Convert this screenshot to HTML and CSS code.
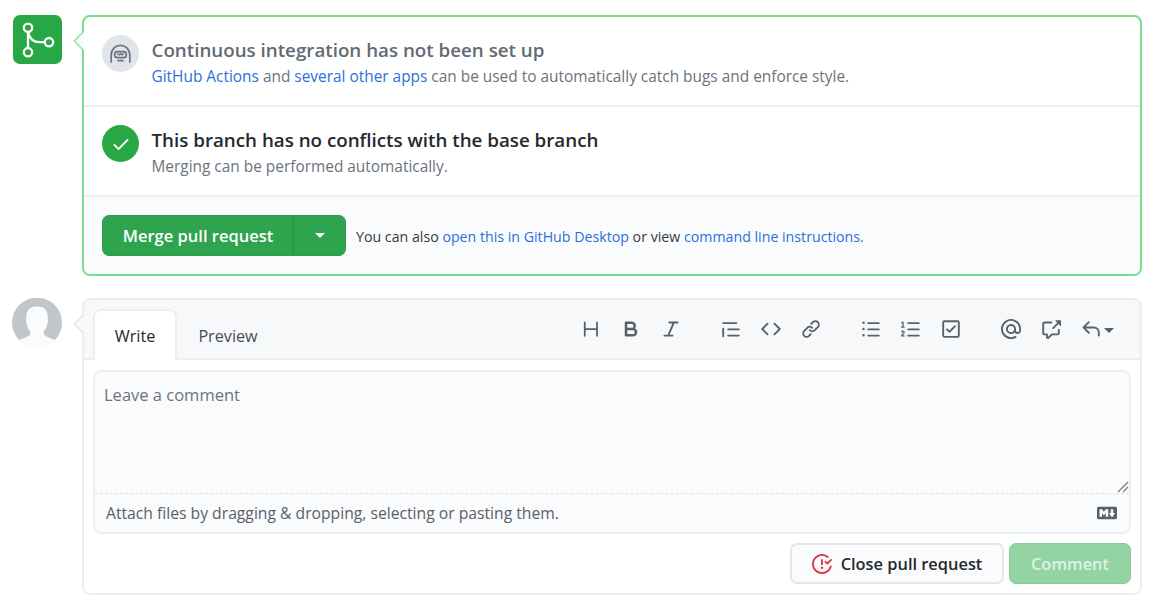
FILE: index.html
```html
<!DOCTYPE html>
<html lang="en">
<head>
<meta charset="utf-8">
<title>Pull request</title>
<link rel="stylesheet" href="styles.css">
</head>
<body>
<main class="page">
  <section class="item">
    <div class="badge">
      <svg width="49" height="49" viewBox="0 0 49 49" fill="none" stroke="#fff" stroke-width="2.3"><circle cx="15" cy="12.8" r="4.2"/><circle cx="15" cy="37.2" r="4.2"/><circle cx="36" cy="27.2" r="4.2"/><path d="M15 17v16M15 17c1.500 7 6 10.200 12 10.200h5"/></svg>
    </div>
    <div class="box box-merge">
      <svg class="arrow arrow-green" width="11" height="20" viewBox="0 0 11 20"><path class="fill" d="M11 1 1.500 10 11 19z"/><path class="line" d="M10 1 1.500 10l8.500 9"/></svg>
      <div class="row">
        <div class="circle circle-gray">
          <svg width="21" height="20" viewBox="0 0 21 20" fill="none" stroke="#6a737d" stroke-width="1.700" stroke-linecap="round"><path d="M1.200 18v-7.300a9.300 9.300 0 0 1 18.600 0V18"/><rect x="4.700" y="7.600" width="11.600" height="6" rx="2.600"/><path d="M7.600 9.700l1.500 1.200 1.500-1.200 1.500 1.200 1.400-1.200" stroke-width="1.400"/><path d="M8 16.600h5"/></svg>
        </div>
        <div>
          <h2 class="title muted">Continuous integration has not been set up</h2>
          <p class="sub"><a>GitHub Actions</a> and <a>several other apps</a> can be used to automatically catch bugs and enforce style.</p>
        </div>
      </div>
      <div class="row">
        <div class="circle circle-green">
          <svg width="20" height="20" viewBox="0 0 16 16" fill="#fff"><path d="M13.780 4.220a.75.75 0 010 1.060l-7.250 7.250a.75.75 0 01-1.060 0L2.220 9.280a.75.75 0 011.060-1.060L6 10.940l6.720-6.720a.75.75 0 011.060 0z"/></svg>
        </div>
        <div>
          <h2 class="title">This branch has no conflicts with the base branch</h2>
          <p class="sub">Merging can be performed automatically.</p>
        </div>
      </div>
      <div class="actions">
        <div class="merge"><button class="merge-main">Merge pull request</button><button class="merge-more"><i class="caret"></i></button></div>
        <p class="also">You can also <a>open this in GitHub Desktop</a> or view <a>command line instructions.</a></p>
      </div>
    </div>
  </section>

  <section class="item">
    <svg class="avatar" width="50" height="50" viewBox="0 0 50 50"><circle cx="25" cy="25" r="25" fill="#fafbfc"/><path d="M7 42A25 25 0 1 1 43 42C38 40 32 38.500 31.500 35.500c0-3 3.500-5 3.800-10.500 1.200-1 1-2.500.4-3C36.500 13 33 8.500 25 8.500S13.500 13 14.300 22c-.6.5-.8 2 .4 3 .3 5.500 3.800 7.500 3.800 10.500C18 38.500 12 40 7 42z" fill="#c1c6cb"/></svg>
    <div class="box box-comment">
      <svg class="arrow arrow-gray" width="11" height="20" viewBox="0 0 11 20"><path class="fill" d="M11 1 1.500 10 11 19z"/><path class="line" d="M10 1 1.500 10l8.500 9"/></svg>
      <header class="head">
        <nav class="tabs"><span class="tab tab-on">Write</span><span class="tab">Preview</span></nav>
        <div class="toolbar">
          <div class="group">
            <svg viewBox="0 0 16 16"><path d="M3 2.600v10.800M12.800 2.600v10.800M3 8h9.800" fill="none" stroke="#586069" stroke-width="1.400" stroke-linecap="round"/></svg>
            <svg viewBox="0 0 16 16"><path fill-rule="evenodd" d="M4 2a1 1 0 00-1 1v10a1 1 0 001 1h5.500a3.500 3.500 0 001.852-6.470A3.500 3.500 0 008.500 2H4zm4.500 5a1.500 1.500 0 100-3H5v3h3.500zM5 9v3h4.500a1.500 1.500 0 000-3H5z"/></svg>
            <svg viewBox="0 0 16 16"><path d="M6 2.750A.75.75 0 016.750 2h6.500a.75.75 0 010 1.500h-2.505l-3.858 9H9.250a.75.75 0 010 1.500h-6.500a.75.75 0 010-1.500h2.505l3.858-9H6.750A.75.75 0 016 2.750z"/></svg>
          </div>
          <div class="group">
            <svg viewBox="0 0 16 16"><path d="M1.750 2.500a.75.75 0 000 1.500h10.500a.75.75 0 000-1.500H1.750zm4 5a.75.75 0 000 1.500h8.500a.75.75 0 000-1.500h-8.500zm0 5a.75.75 0 000 1.500h8.500a.75.75 0 000-1.500h-8.500zM2.500 7.750a.75.75 0 00-1.500 0v6a.75.75 0 001.500 0v-6z"/></svg>
            <svg viewBox="0 0 16 16"><path d="M4.720 3.220a.75.75 0 011.060 1.060L2.060 8l3.720 3.720a.75.75 0 11-1.060 1.060L.47 8.530a.75.75 0 010-1.060l4.250-4.250zm6.560 0a.75.75 0 10-1.060 1.060L13.940 8l-3.720 3.720a.75.75 0 101.060 1.060l4.250-4.250a.75.75 0 000-1.060l-4.250-4.250z"/></svg>
            <svg viewBox="0 0 16 16"><path d="M7.775 3.275a.75.75 0 001.060 1.060l1.250-1.250a2 2 0 112.830 2.830l-2.500 2.500a2 2 0 01-2.830 0 .75.75 0 00-1.060 1.060 3.500 3.500 0 004.950 0l2.500-2.500a3.500 3.500 0 00-4.950-4.950l-1.250 1.250zm-4.690 9.640a2 2 0 010-2.830l2.500-2.500a2 2 0 012.830 0 .75.75 0 001.060-1.060 3.500 3.500 0 00-4.950 0l-2.500 2.500a3.500 3.500 0 004.950 4.950l1.250-1.250a.75.75 0 00-1.060-1.060l-1.250 1.250a2 2 0 01-2.830 0z"/></svg>
          </div>
          <div class="group">
            <svg viewBox="0 0 16 16"><path d="M2 4a1 1 0 100-2 1 1 0 000 2zm3.750-1.500a.75.75 0 000 1.500h8.500a.75.75 0 000-1.500h-8.500zm0 5a.75.75 0 000 1.500h8.500a.75.75 0 000-1.500h-8.500zm0 5a.75.75 0 000 1.500h8.500a.75.75 0 000-1.500h-8.500zM3 8a1 1 0 11-2 0 1 1 0 012 0zm-1 6a1 1 0 100-2 1 1 0 000 2z"/></svg>
            <svg viewBox="0 0 16 16"><path d="M5.750 3.250h8.500M5.750 8.250h8.500M5.750 13.250h8.500" fill="none" stroke="#586069" stroke-width="1.500" stroke-linecap="round"/><path d="M.6 3l1-.5v4M.5 6.500h2M.5 10.300c.5-1 2-.9 2 .2 0 1.400-2 1.500-2 3h2" fill="none" stroke="#586069" stroke-linecap="round" stroke-linejoin="round"/></svg>
            <svg viewBox="0 0 16 16"><path fill-rule="evenodd" d="M2.500 2.750a.25.25 0 01.25-.25h10.500a.25.25 0 01.25.25v10.500a.25.25 0 01-.25.25H2.750a.25.25 0 01-.25-.25V2.750zM2.750 1A1.750 1.750 0 001 2.750v10.500c0 .966.784 1.750 1.750 1.750h10.500A1.750 1.750 0 0015 13.250V2.750A1.750 1.750 0 0013.250 1H2.750zm9.030 5.280a.75.75 0 00-1.060-1.060L6.750 9.190 5.280 7.720a.75.75 0 00-1.060 1.060l2 2a.75.75 0 001.060 0l4.500-4.500z"/></svg>
          </div>
          <div class="group">
            <svg viewBox="0 0 16 16"><path fill-rule="evenodd" d="M4.750 2.370a6.500 6.500 0 006.500 11.260.75.75 0 01.75 1.298 8 8 0 113.994-7.273.754.754 0 01.006.095v1.500a2.750 2.750 0 01-5.072 1.475A4 4 0 1112 8v1.250a1.250 1.250 0 002.500 0V7.867a6.500 6.500 0 00-9.750-5.496V2.370zM10.500 8a2.500 2.500 0 10-5 0 2.500 2.500 0 005 0z"/></svg>
            <svg viewBox="0 0 16 16"><path d="M16 1.250v4.146a.25.25 0 01-.427.177L14.030 4.030l-3.750 3.750a.75.75 0 11-1.060-1.060l3.750-3.750-1.543-1.543A.25.25 0 0111.604 1h4.146a.25.25 0 01.25.25zM2.750 3.500a.25.25 0 00-.25.25v7.500c0 .138.112.25.25.25h2a.75.75 0 01.75.75v2.190l2.720-2.720a.75.75 0 01.53-.22h4.500a.25.25 0 00.25-.25v-2.500a.75.75 0 111.500 0v2.500A1.750 1.750 0 0113.250 13H9.060l-2.573 2.573A1.457 1.457 0 014 14.543V13H2.750A1.750 1.750 0 011 11.250v-7.500C1 2.784 1.784 2 2.750 2h5.500a.75.75 0 010 1.500h-5.500z"/></svg>
            <div class="reply"><svg viewBox="0 0 16 16"><path d="M6.780 1.970a.75.75 0 010 1.060L3.810 6h6.440A4.750 4.750 0 0115 10.750v2.500a.75.75 0 01-1.500 0v-2.500a3.250 3.250 0 00-3.250-3.250H3.810l2.970 2.970a.75.75 0 11-1.060 1.060L1.470 7.280a.75.75 0 010-1.060l4.250-4.250a.75.75 0 011.060 0z"/></svg><i class="caret caret-dark"></i></div>
          </div>
        </div>
      </header>
      <div class="editor">
        <div class="area"><span class="placeholder">Leave a comment</span><svg class="grip" width="12" height="12" viewBox="0 0 12 12"><path d="M1 11 11 1M6 11l5-5" stroke="#777" stroke-width="1.200"/></svg></div>
        <div class="attach"><span>Attach files by dragging &amp; dropping, selecting or pasting them.</span><svg width="20" height="20" viewBox="0 0 16 16" fill="#586069"><path fill-rule="evenodd" d="M14.850 3H1.150C.52 3 0 3.520 0 4.150v7.690C0 12.480.52 13 1.150 13h13.690c.64 0 1.150-.52 1.150-1.150v-7.700C16 3.520 15.480 3 14.850 3zM9 11H7V8L5.500 9.920 4 8v3H2V5h2l1.500 2L7 5h2v6zm2.990.5L9.500 8H11V5h2v3h1.500l-2.510 3.500z"/></svg></div>
      </div>
      <footer class="foot">
        <button class="btn btn-close"><svg width="20" height="20" viewBox="0 0 16 16" fill="#d73a49"><path d="M1.500 8a6.500 6.500 0 0110.650-5.003.75.75 0 00.959-1.153 8 8 0 102.592 8.330.75.75 0 10-1.444-.407A6.500 6.500 0 011.500 8zM8 12a1 1 0 100-2 1 1 0 000 2zm0-8a.75.75 0 01.75.75v3.500a.75.75 0 11-1.500 0v-3.500A.75.75 0 018 4zm4.780 4.280l3-3a.75.75 0 00-1.060-1.060l-2.470 2.470-.97-.97a.749.749 0 10-1.060 1.060l1.500 1.500a.75.75 0 001.060 0z"/></svg><span>Close pull request</span></button>
        <button class="btn btn-comment">Comment</button>
      </footer>
    </div>
  </section>
</main>
</body>
</html>
```
FILE: styles.css
```css
* { box-sizing: border-box; }
body { margin: 0; background: #fff; color: #24292e; font-family: "Open Sans", "Noto Sans", sans-serif; }
h2, p { margin: 0; white-space: nowrap; }
a { color: #2b6fdb; }
button { font: inherit; border: 0; padding: 0; margin: 0; }
svg { display: block; flex: none; }
.page { display: flex; flex-direction: column; gap: 22px; padding: 15px 14px 0 12px; }
.item { display: flex; align-items: flex-start; }
.badge { width: 49px; height: 49px; margin: 0 20px 0 1px; border-radius: 7px; background: #28a745; flex: none; }
.avatar { margin-right: 20px; }
.box { position: relative; width: 1060px; border-radius: 8px; }
.box-merge { height: 261px; border: 2px solid #76df8b; }
.box-comment { height: 297px; border: 2px solid #eceef0; }
.arrow { position: absolute; left: -11px; top: 14px; }
.arrow .line { fill: none; stroke-width: 1.500; }
.arrow-green .fill { fill: #fafbfc; }
.arrow-green .line { stroke: #8be79d; }
.arrow-gray .fill { fill: #f6f8fa; }
.arrow-gray .line { stroke: #e1e4e8; }
.row { display: flex; gap: 12px; height: 90px; padding: 18px 18px 0; border-bottom: 2px solid #eeeff1; }
.circle { width: 37px; height: 37px; margin-right: .5px; border-radius: 50%; display: flex; align-items: center; justify-content: center; flex: none; }
.circle-gray { background: #e1e4e8; }
.circle-green { background: #28a745; }
.title { font-size: 18.75px; line-height: 30px; font-weight: 600; }
.muted { color: #626a72; }
.sub { font-size: 15.42px; line-height: 24px; color: #6a737d; }
.actions { display: flex; align-items: center; gap: 10px; height: 77px; padding: 0 18px; background: #fafbfc; border-radius: 0 0 6px 6px; }
.merge { display: flex; width: 244px; height: 41px; border-radius: 7px; border: 1px solid #2b9c4b; background: #2ea44f; overflow: hidden; }
.merge-main { width: 191px; background: none; color: #fff; font-size: 16.5px; font-weight: 600; border-right: 1px solid #27914a; white-space: nowrap; }
.merge-more { flex: 1; background: none; display: flex; align-items: center; justify-content: center; }
.caret { width: 0; height: 0; border: 5px solid transparent; border-top-color: #fff; border-bottom: 0; }
.caret-dark { border-top-color: #586069; margin-top: 2px; }
.also { font-size: 14.2px; padding-top: 1px; color: #353a3f; }
.head { display: flex; justify-content: space-between; height: 60px; background: #f6f8fa; border-bottom: 2px solid #eceef0; border-radius: 6px 6px 0 0; padding: 0 26px 0 9px; }
.tabs { display: flex; padding-top: 9px; }
.tab { width: 102px; height: 51px; padding-top: 2px; display: flex; align-items: center; justify-content: center; font-size: 16.2px; color: #444d56; }
.tab-on { width: 84px; border: 2px solid #eceef0; border-bottom: 0; border-radius: 8px 8px 0 0; background: #fff; padding: 0; color: #24292e; }
.toolbar { display: flex; gap: 40px; padding-top: 19px; height: 39px; }
.group { display: flex; gap: 20px; }
.group svg { width: 20px; height: 20px; fill: #586069; }
.reply { display: flex; align-items: center; gap: 3px; }
.editor { width: 1038px; height: 164px; margin: 10px 9px 0; border: 2px solid #eceef0; border-radius: 8px; background: #fafbfc; }
.area { display: flex; justify-content: space-between; height: 122px; border-bottom: 1px dashed #dfe2e5; padding: 10px 0 0 9px; }
.placeholder { font-size: 16.5px; line-height: 26px; color: #6a737d; }
.grip { align-self: flex-end; }
.attach { display: flex; align-items: center; justify-content: space-between; height: 38px; padding: 0 12px 0 11px; font-size: 15.7px; color: #586069; white-space: nowrap; }
.foot { display: flex; justify-content: flex-end; gap: 5px; padding: 9px 9px 0; }
.btn { display: flex; align-items: center; justify-content: center; gap: 9px; height: 41px; border-radius: 7px; font-size: 16.4px; font-weight: 600; white-space: nowrap; }
.btn-close { width: 214px; border: 2px solid #e4e6e9; background: #fafbfc; color: #24292e; }
.btn-comment { width: 122px; border: 1px solid #8bca9b; background: #94d3a2; color: #dff2e3; }
```
